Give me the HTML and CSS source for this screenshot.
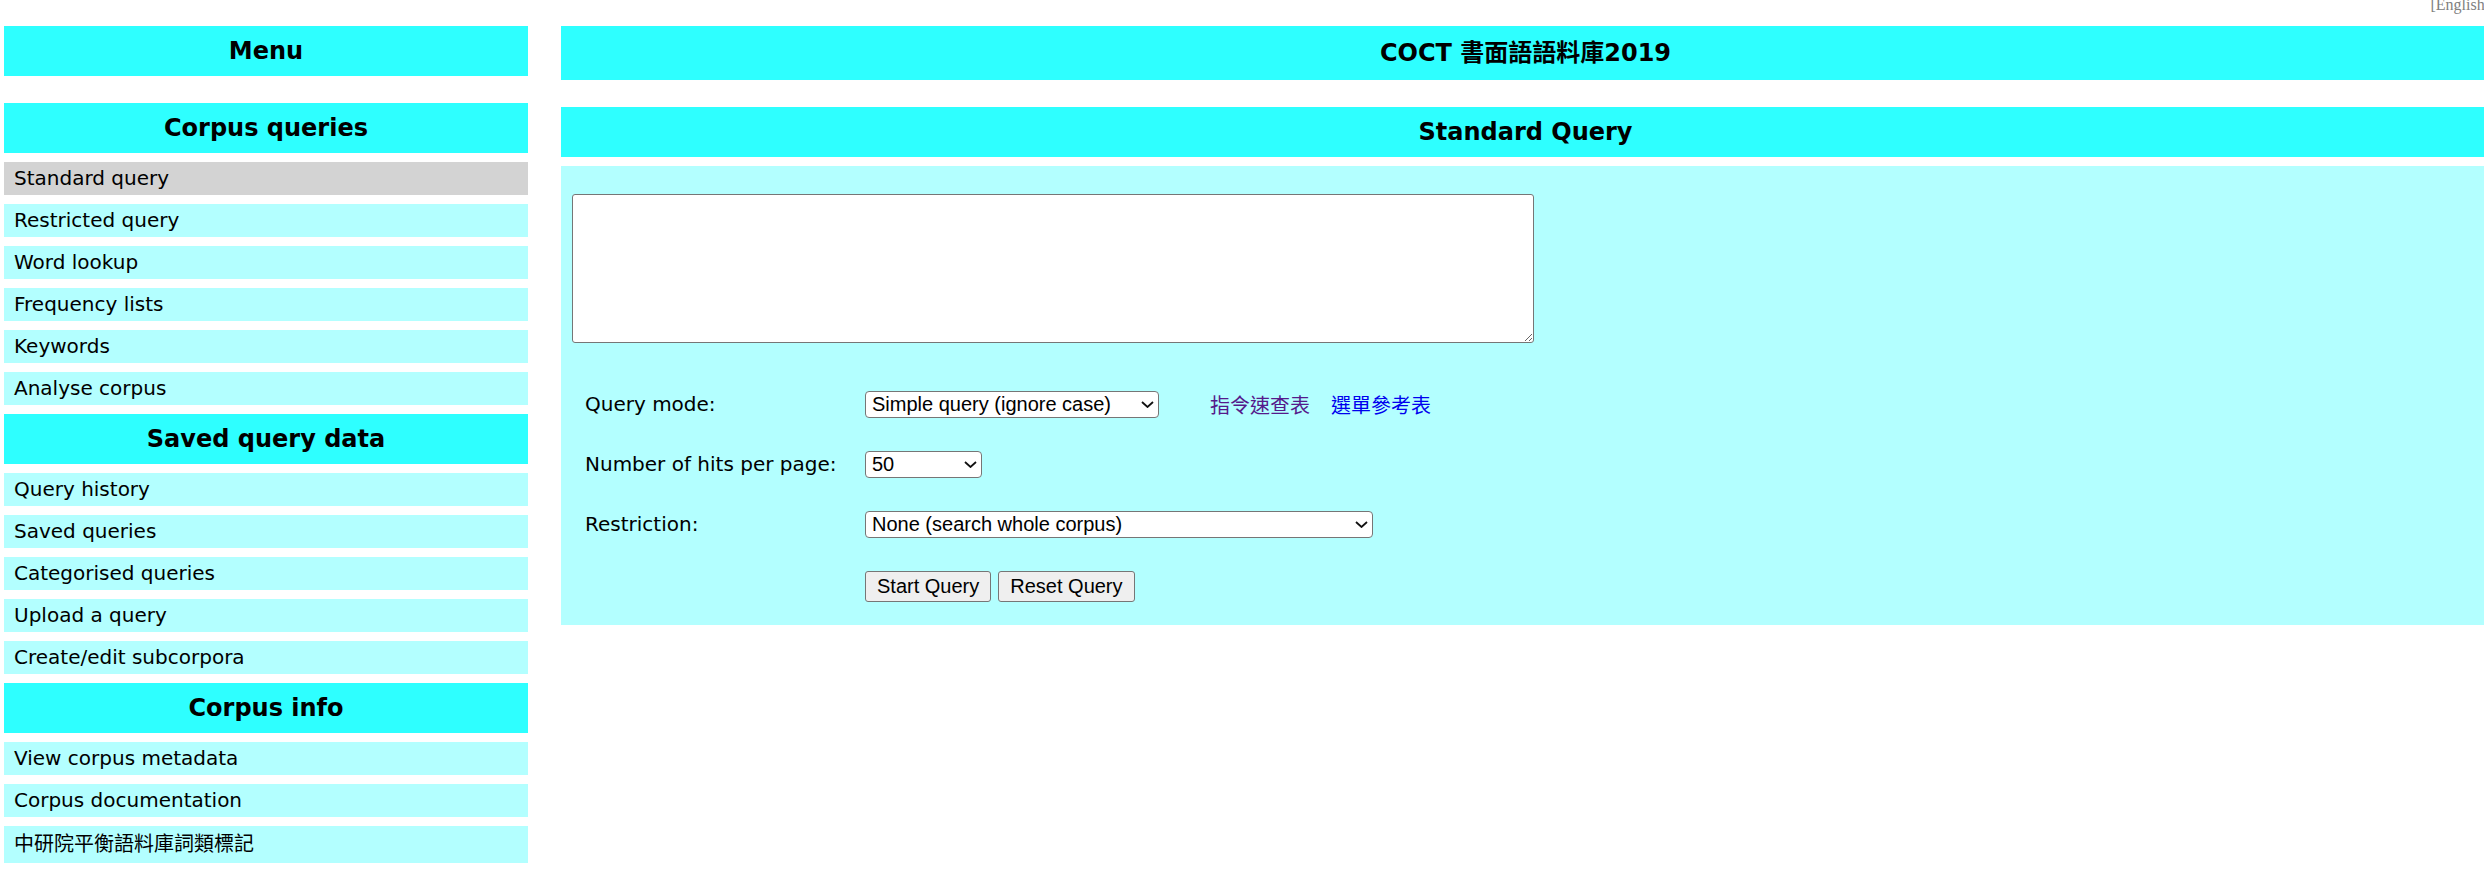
FILE: index.html
```html
<!DOCTYPE html>
<html lang="zh-Hant">
<head>
<meta charset="utf-8">
<title>COCT 書面語語料庫2019 -- Standard Query</title>
<link rel="stylesheet" href="styles.css">
</head>
<body>
<div class="page">
  <div class="langbar"><a class="lang" href="#">[English]</a></div>
  <div class="layout">
    <nav class="left">
      <div class="head head-menu">Menu</div>
      <div class="head">Corpus queries</div>
      <a class="item current" href="#">Standard query</a>
      <a class="item" href="#">Restricted query</a>
      <a class="item" href="#">Word lookup</a>
      <a class="item" href="#">Frequency lists</a>
      <a class="item" href="#">Keywords</a>
      <a class="item" href="#">Analyse corpus</a>
      <div class="head">Saved query data</div>
      <a class="item" href="#">Query history</a>
      <a class="item" href="#">Saved queries</a>
      <a class="item" href="#">Categorised queries</a>
      <a class="item" href="#">Upload a query</a>
      <a class="item" href="#">Create/edit subcorpora</a>
      <div class="head">Corpus info</div>
      <a class="item" href="#">View corpus metadata</a>
      <a class="item" href="#">Corpus documentation</a>
      <a class="item item-cjk" href="#">中研院平衡語料庫詞類標記</a>
    </nav>
    <main class="right">
      <div class="head title">COCT 書面語語料庫2019</div>
      <div class="head">Standard Query</div>
      <form class="panel">
        <textarea class="query-box"></textarea>
        <div class="rows">
          <div class="label">Query mode:</div>
          <div class="value">
            <span class="sel sel-mode">
              <select><option>Simple query (ignore case)</option></select>
              <svg class="chev" width="13" height="7" viewBox="0 0 13 7"><path d="M1 1l5.5 5 5.5-5" fill="none" stroke="#111" stroke-width="1.8"/></svg>
            </span>
            <a class="link visited" href="#">指令速查表</a>
            <a class="link" href="#">選單參考表</a>
          </div>
          <div class="label">Number of hits per page:</div>
          <div class="value">
            <span class="sel sel-hits">
              <select><option>50</option></select>
              <svg class="chev" width="13" height="7" viewBox="0 0 13 7"><path d="M1 1l5.5 5 5.5-5" fill="none" stroke="#111" stroke-width="1.8"/></svg>
            </span>
          </div>
          <div class="label">Restriction:</div>
          <div class="value">
            <span class="sel sel-restr">
              <select><option>None (search whole corpus)</option></select>
              <svg class="chev" width="13" height="7" viewBox="0 0 13 7"><path d="M1 1l5.5 5 5.5-5" fill="none" stroke="#111" stroke-width="1.8"/></svg>
            </span>
          </div>
          <div class="label"></div>
          <div class="value buttons">
            <button type="button" class="btn">Start Query</button>
            <button type="button" class="btn">Reset Query</button>
          </div>
        </div>
      </form>
    </main>
  </div>
</div>
</body>
</html>
```
FILE: styles.css
```css
html, body {
  margin: 0;
  padding: 0;
  background: #ffffff;
  overflow: hidden;
}

.page {
  width: 2490px;
  font-family: "DejaVu Sans", Verdana, "Noto Sans CJK TC", sans-serif;
  font-size: 20px;
  color: #000;
}

.langbar {
  height: 26px;
  text-align: right;
  font-family: "Liberation Serif", "Noto Sans CJK TC", serif;
  font-size: 16px;
  line-height: 16px;
}

.lang {
  position: relative;
  top: -3px;
  color: #808080;
  text-decoration: none;
}

.layout {
  display: flex;
  gap: 33px;
  padding-left: 4px;
  align-items: flex-start;
}

.left {
  width: 524px;
  display: flex;
  flex-direction: column;
  gap: 9px;
}

.right {
  flex: 1;
  display: flex;
  flex-direction: column;
  gap: 9px;
}

.head {
  height: 50px;
  line-height: 50px;
  background: #2effff;
  text-align: center;
  font-weight: bold;
  font-size: 24px;
  font-family: "DejaVu Sans", Verdana, "Noto Sans CJK TC", sans-serif;
}

.head-menu {
  margin-bottom: 18px;
}

.title {
  height: 54px;
  line-height: 54px;
  margin-bottom: 18px;
}

.item {
  display: block;
  background: #b3ffff;
  color: #000;
  text-decoration: none;
  line-height: 23px;
  padding: 5px 0 5px 10px;
}

.item.current {
  background: #d3d3d3;
}

.item-cjk {
  line-height: 27px;
}

.panel {
  background: #b3ffff;
  padding: 28px 0 7px 11px;
  margin: 0;
}

.query-box {
  display: block;
  box-sizing: border-box;
  width: 962px;
  height: 149px;
  margin: 0;
  border: 1px solid #767676;
  border-radius: 3px;
  background: #fff;
  font-family: "Liberation Mono", monospace;
  font-size: 20px;
}

.rows {
  display: grid;
  grid-template-columns: 280px 1fr;
  grid-template-rows: 60px 60px 60px 64px;
  align-items: center;
  margin-left: 13px;
  margin-top: 31px;
}

.label {
  font-size: 20px;
}

.value {
  display: flex;
  align-items: center;
}

.sel {
  position: relative;
  display: inline-block;
}

.sel select {
  appearance: none;
  -webkit-appearance: none;
  box-sizing: border-box;
  height: 27px;
  margin: 0;
  padding: 0 0 0 6px;
  border: 1px solid #767676;
  border-radius: 4px;
  background: #fff;
  color: #000;
  font-family: "Liberation Sans", Arial, sans-serif;
  font-size: 20px;
  line-height: 25px;
}

.sel-mode select { width: 294px; }
.sel-hits select { width: 117px; }
.sel-restr select { width: 508px; }

.chev {
  position: absolute;
  right: 5px;
  top: 10px;
  pointer-events: none;
}

.link {
  font-family: "Noto Sans CJK TC", sans-serif;
  font-size: 20px;
  color: #0000ee;
  text-decoration: none;
  margin-left: 21px;
}

.link.visited {
  color: #551a8b;
  margin-left: 51px;
}

.buttons {
  gap: 7px;
}

.btn {
  box-sizing: border-box;
  height: 31px;
  margin: 0;
  padding: 0 11px;
  border: 1px solid #767676;
  border-radius: 3px;
  background: #efefef;
  color: #000;
  font-family: "Liberation Sans", Arial, sans-serif;
  font-size: 20px;
}
```
